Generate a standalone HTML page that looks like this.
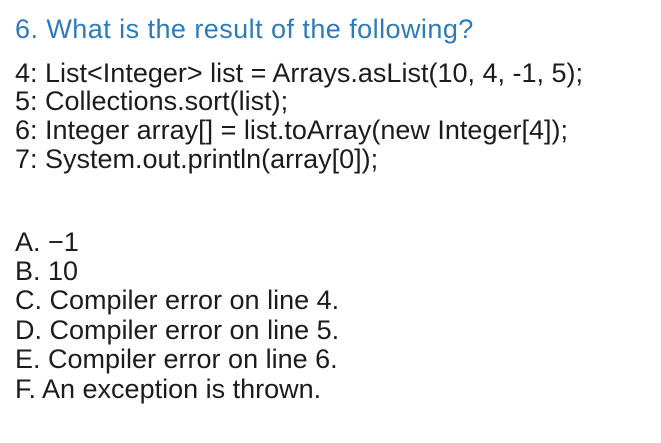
<!DOCTYPE html>
<html><head><style>
body{margin:0;width:661px;height:443px;background:#fff;overflow:hidden;position:relative;font-family:"Liberation Sans",sans-serif;font-size:27px;line-height:27px;color:#1c1c1c}
div{position:absolute;left:15px;white-space:pre}
.t{color:#2c7bba;letter-spacing:0.45px}
</style></head><body>
<div class="t" style="top:16px">6. What is the result of the following?</div>
<div style="top:60px">4: List&lt;Integer&gt; list = Arrays.asList(10, 4, -1, 5);</div>
<div style="top:88px">5: Collections.sort(list);</div>
<div style="top:117px">6: Integer array[] = list.toArray(new Integer[4]);</div>
<div style="top:146px">7: System.out.println(array[0]);</div>
<div style="top:229px">A. −1</div>
<div style="top:258px">B. 10</div>
<div style="top:287px">C. Compiler error on line 4.</div>
<div style="top:317px">D. Compiler error on line 5.</div>
<div style="top:346px">E. Compiler error on line 6.</div>
<div style="top:376px">F. An exception is thrown.</div>
</body></html>
